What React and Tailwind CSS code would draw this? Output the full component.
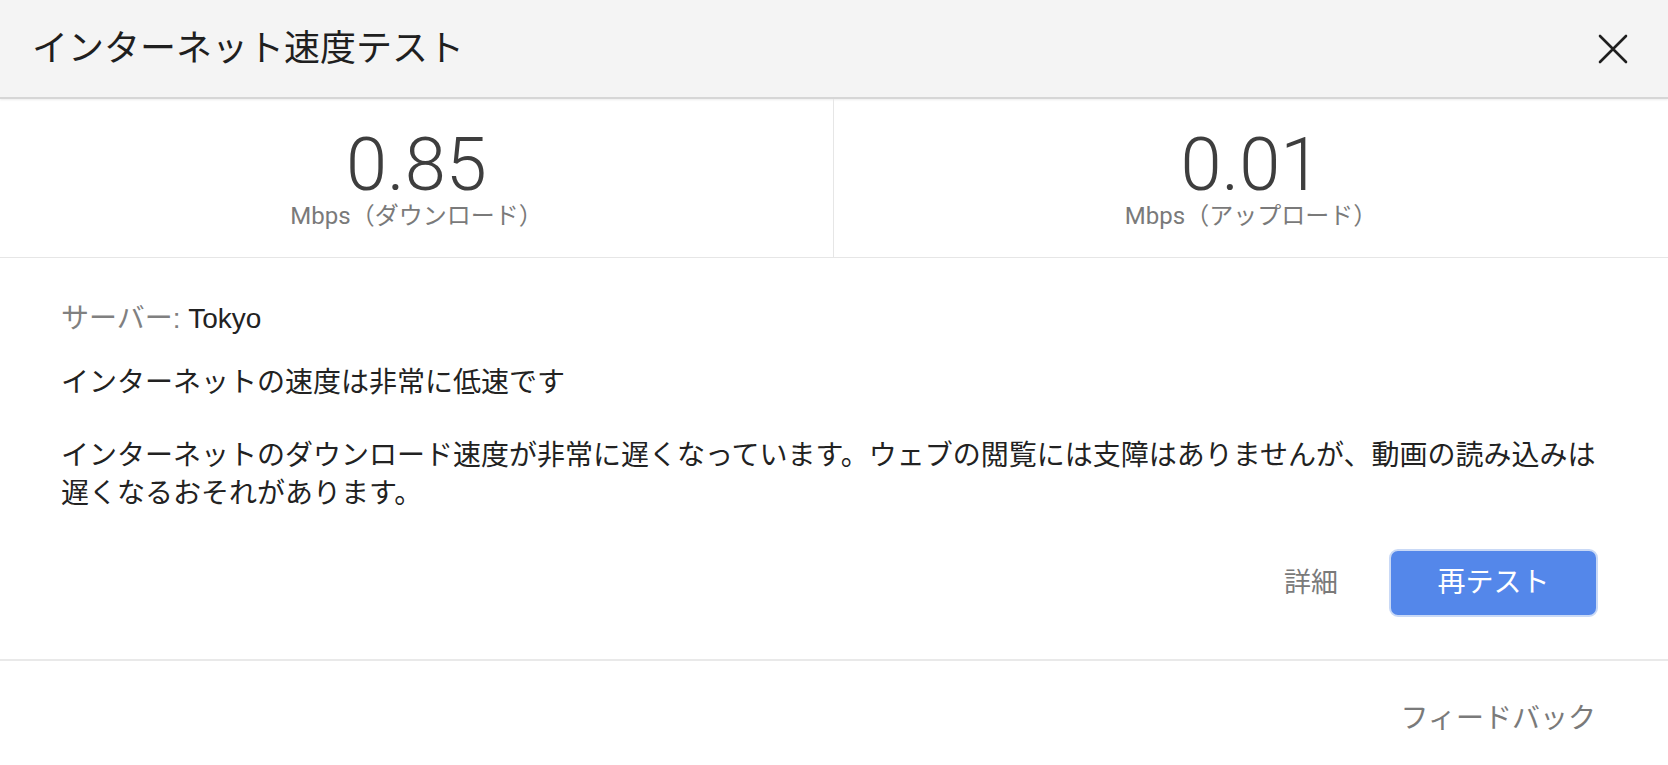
const jp = "font-['Liberation_Sans','Noto_Sans_CJK_JP',sans-serif]"
const num = "font-['Roboto','Noto_Sans_CJK_JP',sans-serif]"

function Stat({ value, label, divider }) {
  return (
    <div className={`flex h-[158px] flex-col items-center pt-[31px] ${divider ? 'border-r border-[#e6e6e6]' : ''}`}>
      <div className={`${num} text-[74px] font-light leading-[70px] text-[#3e3e3e]`}>{value}</div>
      <div className={`${num} mt-[3px] text-[24px] leading-[26px] text-[#7a7a7a]`}>{label}</div>
    </div>
  )
}

export default function App() {
  return (
    <div className={`${jp} h-[765px] w-full overflow-hidden bg-white`}>
      <header className="flex h-[99px] items-center justify-between border-b-2 border-[#d6d6d6] bg-[#f4f4f4] pl-[32px] pr-[40px] shadow-[0_1px_2px_rgba(0,0,0,0.08)]">
        <h1 className="text-[36px] font-normal text-[#1f1f1f]">インターネット速度テスト</h1>
        <button className="text-[#1f1f1f]">
          <svg width="30" height="30" viewBox="0 0 30 30" fill="none" stroke="currentColor" strokeWidth="2.6" strokeLinecap="round">
            <path d="M2 2 L28 28 M28 2 L2 28" />
          </svg>
        </button>
      </header>

      <div className="grid grid-cols-2 border-b border-[#e6e6e6]">
        <Stat value="0.85" label="Mbps（ダウンロード）" divider />
        <Stat value="0.01" label="Mbps（アップロード）" />
      </div>

      <div className="pl-[61px] pr-[70px] pt-[42px] pb-[42px] text-[28px] leading-[38px] text-[#222]">
        <p>
          <span className="text-[#808080]">サーバー: </span>Tokyo
        </p>
        <p className="mt-[26px]">インターネットの速度は非常に低速です</p>
        <p className="-mr-[14px] mt-[35px]">
          インターネットのダウンロード速度が非常に遅くなっています。ウェブの閲覧には支障はありませんが、動画の読み込みは遅くなるおそれがあります。
        </p>
        <div className="mt-[36px] flex items-center justify-end gap-[51px]">
          <button className="text-[27px] text-[#7a7a7a]">詳細</button>
          <button className="flex h-[68px] w-[209px] items-center justify-center rounded-[9px] border-2 border-[#c9d9f6] bg-[#5487ea] text-[28px] text-white">
            再テスト
          </button>
        </div>
      </div>

      <div className="h-[2px] bg-[#e9e9e9]" />

      <div className="flex justify-end pr-[72px] pt-[39px] text-[28px] leading-[38px] text-[#7a7a7a]">
        フィードバック
      </div>
    </div>
  )
}
